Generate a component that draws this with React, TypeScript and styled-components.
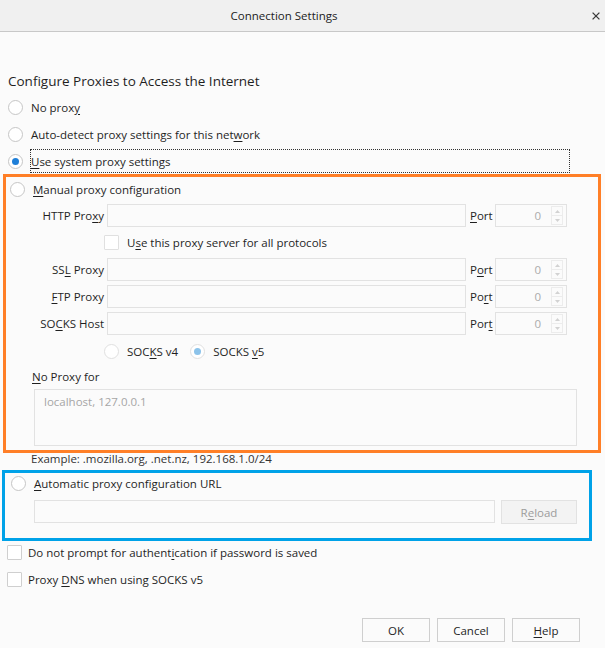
import React from "react";
import styled, { createGlobalStyle } from "styled-components";

const GlobalStyle = createGlobalStyle`
  html, body {
    margin: 0;
    padding: 0;
    background: #fbfbfb;
  }
  body {
    font-family: "Open Sans", "Noto Sans", sans-serif;
    font-size: 11.5px;
    color: #1f1f1f;
  }
  * {
    box-sizing: border-box;
  }
`

const Dialog = styled.div`
  width: 605px;
  height: 648px;
  display: flex;
  flex-direction: column;
  background: #fbfbfb;
  overflow: hidden;
`

const TitleBar = styled.div`
  height: 32px;
  flex: none;
  display: grid;
  grid-template-columns: 1fr 8px;
  align-items: center;
  padding-right: 5px;
  background: #f0f0f0;
  border-bottom: 1px solid #c8c8c8;
`

const Title = styled.div`
  text-align: center;
  padding-right: 24px;
  color: #222;
`

const CloseIcon = () => (
  <svg width="8" height="8" viewBox="0 0 8 8">
    <path d="M0.6 0.6 L7.4 7.4 M7.4 0.6 L0.6 7.4" stroke="#3a3a3a" strokeWidth="1.3" fill="none"/>
  </svg>
)

const Content = styled.div`
  display: flex;
  flex-direction: column;
  padding-top: 40px;
`

const Heading = styled.h1`
  margin: 0 0 5px 8px;
  font-size: 13.5px;
  line-height: 18px;
  font-weight: normal;
  color: #1f1f1f;
`

const Key = styled.span`
  text-decoration: underline;
  text-underline-offset: 2px;
  text-decoration-thickness: 1px;
`

const RadioRow = styled.div<{ $indent?: number, $height?: number, $after?: number }>`
  display: flex;
  align-items: center;
  height: ${ p => p.$height ?? 24 }px;
  margin-bottom: ${ p => p.$after ?? 3 }px;
  padding-left: ${ p => p.$indent ?? 8 }px;
  gap: 8px;
`

const RadioCircle = styled.span<{ $checked?: boolean, $disabled?: boolean }>`
  flex: none;
  width: 15px;
  height: 15px;
  border-radius: 50%;
  border: 1px solid ${ p => p.$disabled ? "#e0e0e0" : "#c6c6c6" };
  background: #fff;
  display: flex;
  align-items: center;
  justify-content: center;

  &::after {
    content: "";
    display: ${ p => p.$checked ? "block" : "none" };
    width: 7px;
    height: 7px;
    border-radius: 50%;
    background: ${ p => p.$disabled ? "#8cc3ea" : "#1f7fd8" };
  }
`

const RadioLabel = styled.span<{ $focus?: boolean }>`
  align-self: stretch;
  display: flex;
  align-items: center;
  border: 1px ${ p => p.$focus ? "dotted #333" : "solid transparent" };
  margin-left: -1px;
  width: ${ p => p.$focus ? "540px" : "auto" };
  white-space: nowrap;
`

const ManualBox = styled.div`
  margin: 1px 4px 0 3px;
  border: 3px solid #ff7f27;
  padding: 0 0 4px 2px;
`

const ProxyGrid = styled.div`
  display: grid;
  grid-template-columns: 99px 359px 29px 72px;
  grid-auto-rows: 23px;
  row-gap: 4px;
`

const FieldLabel = styled.span`
  align-self: center;
  text-align: right;
  padding-right: 3px;
  white-space: nowrap;
`

const PortLabel = styled.span`
  align-self: center;
  padding-left: 4px;
`

const TextField = styled.input<{ $width?: number }>`
  height: 23px;
  width: ${ p => p.$width ? `${ p.$width }px` : "auto" };
  margin: 0;
  border: 1px solid #e2e2e2;
  background: #fbfbfb;
  font: inherit;
  padding: 0 4px;
  outline: none;
`

const PortBox = styled.div`
  height: 23px;
  border: 1px solid #e2e2e2;
  background: #fbfbfb;
  display: flex;
  align-items: center;
  justify-content: flex-end;
  padding-right: 3px;
  gap: 10px;
  color: #ababab;
`

const Spinner = styled.div`
  display: flex;
  flex-direction: column;
  width: 12px;
  height: 19px;
`

const SpinButton = styled.span`
  flex: 1;
  border: 1px solid #ececec;
  display: flex;
  align-items: center;
  justify-content: center;

  & + & {
    border-top: none;
  }
`

const Arrow = ({ down }: { down?: boolean }) => (
  <svg width="5" height="3" viewBox="0 0 5 3">
    <path d={ down ? "M0 0 L5 0 L2.5 3 Z" : "M0 3 L5 3 L2.5 0 Z" } fill="#d2d2d2"/>
  </svg>
)

const CheckRow = styled.div<{ $indent?: number, $gap?: number }>`
  display: flex;
  align-items: center;
  gap: ${ p => p.$gap ?? 8 }px;
  padding-left: ${ p => p.$indent ?? 0 }px;
`

const ShareRow = styled(CheckRow)`
  grid-column: 2 / 5;
  margin-left: -3px;
`

const OptionRow = styled(CheckRow)`
  height: 24px;
`

const CheckBox = styled.span<{ $disabled?: boolean }>`
  flex: none;
  width: 15px;
  height: 15px;
  border: 1px solid ${ p => p.$disabled ? "#e0e0e0" : "#cfcfcf" };
  border-radius: 1px;
  background: #fff;
`

const SocksVersions = styled.div`
  display: flex;
  align-items: center;
  height: 24px;
  margin: 4px 0 0 96px;
  gap: 12px;
`

const SocksOption = styled.span`
  display: flex;
  align-items: center;
  gap: 8px;
`

const NoProxyLabel = styled.div`
  margin: 6px 0 0 24px;
  line-height: 16px;
`

const NoProxyArea = styled.textarea`
  display: block;
  margin: 4px 0 0 26px;
  width: 543px;
  height: 57px;
  border: 1px solid #e2e2e2;
  background: #fbfbfb;
  font: inherit;
  line-height: 16px;
  padding: 4px 9px;
  resize: none;
  outline: none;

  &::placeholder {
    color: #a6a6a6;
  }
`

const Example = styled.div`
  margin: -2px 0 0 31px;
  line-height: 16px;
  color: #333;
`

const AutoBox = styled.div`
  margin: 3px 13px 0 2px;
  border: 3px solid #00a2e8;
  padding: 0 0 14px 3px;
`

const UrlRow = styled.div`
  display: flex;
  gap: 6px;
  margin-left: 26px;
`

const Button = styled.button<{ $width?: number, $disabled?: boolean }>`
  width: ${ p => p.$width ?? 68 }px;
  height: 24px;
  margin: 0;
  padding: 0;
  border: 1px solid ${ p => p.$disabled ? "#e2e2e2" : "#cfcfcf" };
  background: ${ p => p.$disabled ? "#f3f3f3" : "#fbfbfb" };
  color: ${ p => p.$disabled ? "#9c9c9c" : "#1f1f1f" };
  font: inherit;
`

const Options = styled.div`
  display: flex;
  flex-direction: column;
  gap: 3px;
  margin-top: -1px;
`

const ButtonBar = styled.div`
  display: flex;
  justify-content: flex-end;
  gap: 7px;
  margin-top: 27px;
  padding-right: 25px;
`

type Row = { label: React.ReactNode, port: React.ReactNode }

const PROXY_ROWS: Row[] = [
  { label: <>SS<Key>L</Key> Proxy</>, port: <>P<Key>o</Key>rt</> },
  { label: <><Key>F</Key>TP Proxy</>, port: <>Po<Key>r</Key>t</> },
  { label: <>SO<Key>C</Key>KS Host</>, port: <>Por<Key>t</Key></> },
]

const PortField = () => (
  <PortBox>
    <span>0</span>
    <Spinner>
      <SpinButton><Arrow/></SpinButton>
      <SpinButton><Arrow down/></SpinButton>
    </Spinner>
  </PortBox>
)

export default function App() {
  return (
    <>
      <GlobalStyle/>
      <Dialog>
        <TitleBar>
          <Title>Connection Settings</Title>
          <CloseIcon/>
        </TitleBar>

        <Content>
          <Heading>Configure Proxies to Access the Internet</Heading>

          <RadioRow>
            <RadioCircle/>
            <RadioLabel>No prox<Key>y</Key></RadioLabel>
          </RadioRow>
          <RadioRow>
            <RadioCircle/>
            <RadioLabel>Auto-detect proxy settings for this net<Key>w</Key>ork</RadioLabel>
          </RadioRow>
          <RadioRow $after={ 0 }>
            <RadioCircle $checked/>
            <RadioLabel $focus><Key>U</Key>se system proxy settings</RadioLabel>
          </RadioRow>

          <ManualBox>
            <RadioRow $indent={ 2 }>
              <RadioCircle/>
              <RadioLabel><Key>M</Key>anual proxy configuration</RadioLabel>
            </RadioRow>

            <ProxyGrid>
              <FieldLabel>HTTP Pro<Key>x</Key>y</FieldLabel>
              <TextField disabled/>
              <PortLabel><Key>P</Key>ort</PortLabel>
              <PortField/>

              <ShareRow>
                <CheckBox $disabled/>
                <span>U<Key>s</Key>e this proxy server for all protocols</span>
              </ShareRow>

              {
                PROXY_ROWS.map((row, i) =>
                  <React.Fragment key={ i }>
                    <FieldLabel>{ row.label }</FieldLabel>
                    <TextField disabled/>
                    <PortLabel>{ row.port }</PortLabel>
                    <PortField/>
                  </React.Fragment>
                )
              }
            </ProxyGrid>

            <SocksVersions>
              <SocksOption>
                <RadioCircle $disabled/>
                <span>SOC<Key>K</Key>S v4</span>
              </SocksOption>
              <SocksOption>
                <RadioCircle $disabled $checked/>
                <span>SOCKS <Key>v</Key>5</span>
              </SocksOption>
            </SocksVersions>

            <NoProxyLabel><Key>N</Key>o Proxy for</NoProxyLabel>
            <NoProxyArea disabled placeholder="localhost, 127.0.0.1"/>
          </ManualBox>

          <Example>Example: .mozilla.org, .net.nz, 192.168.1.0/24</Example>

          <AutoBox>
            <RadioRow $indent={ 3 } $height={ 20 } $after={ 7 }>
              <RadioCircle/>
              <RadioLabel><Key>A</Key>utomatic proxy configuration URL</RadioLabel>
            </RadioRow>
            <UrlRow>
              <TextField disabled $width={ 461 }/>
              <Button $width={ 76 } $disabled disabled>R<Key>e</Key>load</Button>
            </UrlRow>
          </AutoBox>

          <Options>
            <OptionRow $indent={ 7 } $gap={ 6 }>
              <CheckBox/>
              <span>Do not prompt for authent<Key>i</Key>cation if password is saved</span>
            </OptionRow>
            <OptionRow $indent={ 7 } $gap={ 6 }>
              <CheckBox/>
              <span>Proxy <Key>D</Key>NS when using SOCKS v5</span>
            </OptionRow>
          </Options>

          <ButtonBar>
            <Button>OK</Button>
            <Button>Cancel</Button>
            <Button><Key>H</Key>elp</Button>
          </ButtonBar>
        </Content>
      </Dialog>
    </>
  );
}
